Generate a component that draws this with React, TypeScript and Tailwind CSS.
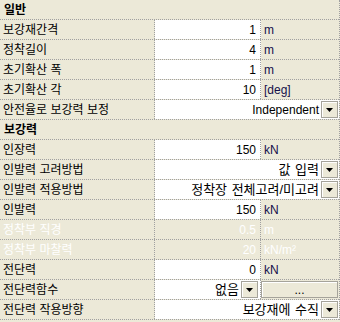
import React from "react"

type Row =
    | { kind: "header"; label: string }
    | { kind: "value"; label: string; value: string; unit: string; disabled?: boolean }
    | { kind: "select"; label: string; value: string }
    | { kind: "func"; label: string; value: string }

// property grid rows
const rows: Row[] = [
    { kind: "header", label: "일반" },
    { kind: "value", label: "보강재간격", value: "1", unit: "m" },
    { kind: "value", label: "정착길이", value: "4", unit: "m" },
    { kind: "value", label: "초기확산 폭", value: "1", unit: "m" },
    { kind: "value", label: "초기확산 각", value: "10", unit: "[deg]" },
    { kind: "select", label: "안전율로 보강력 보정", value: "Independent" },
    { kind: "header", label: "보강력" },
    { kind: "value", label: "인장력", value: "150", unit: "kN" },
    { kind: "select", label: "인발력 고려방법", value: "값 입력" },
    { kind: "select", label: "인발력 적용방법", value: "정착장 전체고려/미고려" },
    { kind: "value", label: "인발력", value: "150", unit: "kN" },
    { kind: "value", label: "정착부 직경", value: "0.5", unit: "m", disabled: true },
    { kind: "value", label: "정착부 마찰력", value: "20", unit: "kN/m²", disabled: true },
    { kind: "value", label: "전단력", value: "0", unit: "kN" },
    { kind: "func", label: "전단력함수", value: "없음" },
    { kind: "select", label: "전단력 작용방향", value: "보강재에 수직" },
]

const isKorean = (s: string) => /[가-힣]/.test(s)

function DropButton() {
    return (
        <div className="w-[17px] h-[17px] shrink-0 border border-[#a5a39a] bg-[#ece9d8] flex items-center justify-center shadow-[inset_1px_1px_0_#ffffff]">
            <svg width="7" height="4" viewBox="0 0 7 4">
                <polygon points="0,0 7,0 3.5,4" fill="#000" />
            </svg>
        </div>
    )
}

function Label({ text, disabled }: { text: string; disabled?: boolean }) {
    return (
        <div className={`w-[155px] shrink-0 h-full border-r border-dotted border-[#a0a0a0] pl-[3px] flex items-center whitespace-nowrap ${disabled ? "text-white" : "text-black"}`}>
            {text}
        </div>
    )
}

export default function App() {
    return (
        <div
            className="min-h-screen w-[340px] bg-[#ece9d8] text-[12px] leading-none"
            style={{ fontFamily: '"Liberation Sans", "Noto Sans CJK KR", sans-serif' }}
        >
            <div className="border-r border-dotted border-[#a0a0a0]">
                {rows.map((row, i) => {
                    if (row.kind === "header") {
                        return (
                            <div key={i} className="h-[20px] border-b border-dotted border-[#a0a0a0] pl-[4px] flex items-center font-bold text-black">
                                {row.label}
                            </div>
                        )
                    }
                    if (row.kind === "value") {
                        return (
                            <div key={i} className="h-[20px] border-b border-dotted border-[#a0a0a0] flex">
                                <Label text={row.label} disabled={row.disabled} />
                                <div className={`w-[106px] shrink-0 h-full border-r border-dotted border-[#a0a0a0] pr-[4px] flex items-center justify-end ${row.disabled ? "bg-[#ece9d8] text-white" : "bg-white text-black"}`}>
                                    {row.value}
                                </div>
                                <div className={`flex-1 h-full pl-[3px] flex items-center ${row.disabled ? "text-white" : "text-[#14104a]"}`}>
                                    {row.unit}
                                </div>
                            </div>
                        )
                    }
                    if (row.kind === "select") {
                        return (
                            <div key={i} className="h-[20px] border-b border-dotted border-[#a0a0a0] flex">
                                <Label text={row.label} />
                                <div className="flex-1 h-full bg-white flex items-center justify-end gap-[2px] pr-[1px] text-black whitespace-nowrap">
                                    <span className={isKorean(row.value) ? "text-[13px] [word-spacing:1px]" : "text-[12px]"}>{row.value}</span>
                                    <DropButton />
                                </div>
                            </div>
                        )
                    }
                    return (
                        <div key={i} className="h-[20px] border-b border-dotted border-[#a0a0a0] flex">
                            <Label text={row.label} />
                            <div className="w-[106px] shrink-0 h-full border-r border-dotted border-[#a0a0a0] bg-white flex items-center justify-end gap-[2px] pr-[2px] text-black">
                                <span className="text-[13px]">{row.value}</span>
                                <DropButton />
                            </div>
                            <div className="flex-1 h-full flex items-center pr-[1px]">
                                <div className="w-full h-[17px] border border-[#a5a39a] bg-[#ece9d8] shadow-[inset_1px_1px_0_#ffffff] flex items-center justify-center text-black">
                                    ...
                                </div>
                            </div>
                        </div>
                    )
                })}
            </div>
        </div>
    )
}
